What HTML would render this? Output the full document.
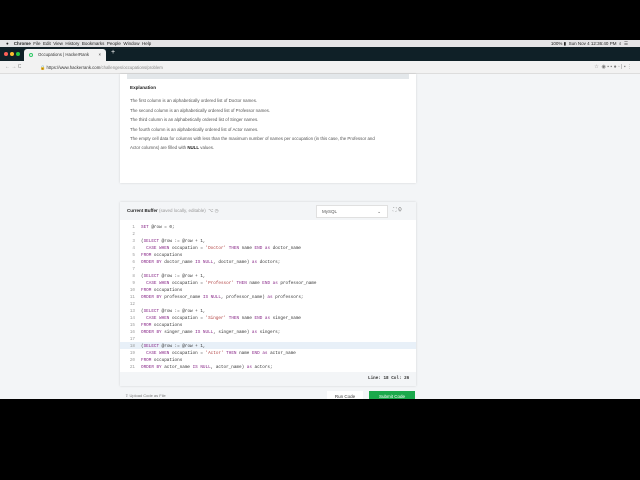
<!DOCTYPE html><html><head><style>
*{margin:0;padding:0;box-sizing:border-box}
body{width:640px;height:480px;background:#000;position:relative;overflow:hidden;font-family:"Liberation Sans",sans-serif}
.a{position:absolute}
.menu{top:40px;left:0;width:640px;height:7px;background:#e4e4e6;font-size:4.5px;line-height:7px;color:#222}
.tabs{top:47px;left:0;width:640px;height:14px;background:#0f2027}
.addr{top:61px;left:0;width:640px;height:13px;background:#f2f2f2;border-bottom:1px solid #ddd}
.page{top:74px;left:0;width:640px;height:325px;background:#f3f5f7}
.card{background:#fff;box-shadow:0 0 2px rgba(0,0,0,.15)}
.t{font-size:4.4px;color:#555;position:absolute;left:130px}
.code{font-family:"Liberation Mono",monospace;font-size:4.3px;color:#333;position:absolute;left:123px;white-space:pre}
.code b{font-weight:normal;color:#8a2a8a}.code i{font-style:normal;color:#b04040}
.ln{display:inline-block;width:12px;text-align:right;color:#999;margin-right:6px}
</style></head><body>
<div class="a menu"><span style="margin-left:6px">●</span><b style="margin-left:5px">Chrome</b>&nbsp; File &nbsp;Edit &nbsp;View &nbsp;History &nbsp;Bookmarks &nbsp;People &nbsp;Window &nbsp;Help<span style="position:absolute;right:12px">100% ▮ &nbsp;Sun Nov 4 12:36:40 PM &nbsp;⌕ &nbsp;☰</span></div>
<div class="a tabs">
<div class="a" style="left:4px;top:5px;width:4px;height:4px;border-radius:50%;background:#fc5f57"></div>
<div class="a" style="left:10px;top:5px;width:4px;height:4px;border-radius:50%;background:#fdbc2e"></div>
<div class="a" style="left:16px;top:5px;width:4px;height:4px;border-radius:50%;background:#28c840"></div>
<div class="a" style="left:24px;top:2px;width:82px;height:12px;background:#f2f2f2;border-radius:3px 3px 0 0;font-size:4.3px;line-height:12px;color:#333;padding-left:14px">Occupations | HackerRank<span style="position:absolute;right:5px">×</span><span style="position:absolute;left:5px;top:4px;width:4px;height:4px;border:1px solid #2ec866;border-radius:50%"></span></div>
<div class="a" style="left:111px;top:2px;color:#fff;font-size:7px">+</div></div>
<div class="a addr"><span class="a" style="left:5px;top:3px;font-size:5px;color:#888">← → C</span><span class="a" style="left:40px;top:4px;font-size:4.3px;color:#333">🔒 https://www.hackerrank.com<span style="color:#888">/challenges/occupations/problem</span></span><span class="a" style="right:8px;top:3px;font-size:5px;color:#777">☆ &nbsp;◉ ▪ ▪ ● ◦ | ▪ ⋮</span></div>
<div class="a page"></div>
<div class="a card" style="left:120px;top:74px;width:296px;height:109px"></div>
<div class="a" style="left:127px;top:74px;width:282px;height:5px;background:#e3e7ea"></div>
<div class="t" style="top:85px;font-weight:bold;color:#222;font-size:4.6px">Explanation</div>
<div class="t" style="top:98px">The first column is an alphabetically ordered list of Doctor names.</div>
<div class="t" style="top:108px">The second column is an alphabetically ordered list of Professor names.</div>
<div class="t" style="top:117px">The third column is an alphabetically ordered list of Singer names.</div>
<div class="t" style="top:127px">The fourth column is an alphabetically ordered list of Actor names.</div>
<div class="t" style="top:136px">The empty cell data for columns with less than the maximum number of names per occupation (in this case, the Professor and</div>
<div class="t" style="top:145px">Actor columns) are filled with <b style="color:#222">NULL</b> values.</div>
<div class="a card" style="left:120px;top:202px;width:296px;height:184px"></div>
<div class="a" style="left:120px;top:202px;width:296px;height:18px;background:#f3f5f7"></div>
<div class="a" style="left:127px;top:208px;font-size:4.5px;color:#222"><b>Current Buffer</b> <span style="color:#999">(saved locally, editable)</span> &nbsp;<span style="color:#888">⌥ ◷</span></div>
<div class="a" style="left:316px;top:205px;width:72px;height:13px;background:#fff;border:1px solid #e0e0e0;font-size:4.5px;line-height:11px;padding-left:5px;color:#555">MySQL<span style="position:absolute;right:6px">⌄</span></div>
<div class="a" style="left:393px;top:207px;font-size:5px;color:#888">⛶ ⚙</div>
<div class="a" style="left:120px;top:342px;width:296px;height:7px;background:#e8f0f8"></div>
<div class="code" style="top:224px;line-height:7px"><span class="ln">1</span><b>SET</b> @row = 0;
<span class="ln">2</span>
<span class="ln">3</span>(<b>SELECT</b> @row := @row + 1,
<span class="ln">4</span>  <b>CASE WHEN</b> occupation = <i>'Doctor'</i> <b>THEN</b> name <b>END</b> <b>as</b> doctor_name
<span class="ln">5</span><b>FROM</b> occupations
<span class="ln">6</span><b>ORDER BY</b> doctor_name <b>IS NULL</b>, doctor_name) <b>as</b> doctors;
<span class="ln">7</span>
<span class="ln">8</span>(<b>SELECT</b> @row := @row + 1,
<span class="ln">9</span>  <b>CASE WHEN</b> occupation = <i>'Professor'</i> <b>THEN</b> name <b>END</b> <b>as</b> professor_name
<span class="ln">10</span><b>FROM</b> occupations
<span class="ln">11</span><b>ORDER BY</b> professor_name <b>IS NULL</b>, professor_name) <b>as</b> professors;
<span class="ln">12</span>
<span class="ln">13</span>(<b>SELECT</b> @row := @row + 1,
<span class="ln">14</span>  <b>CASE WHEN</b> occupation = <i>'Singer'</i> <b>THEN</b> name <b>END</b> <b>as</b> singer_name
<span class="ln">15</span><b>FROM</b> occupations
<span class="ln">16</span><b>ORDER BY</b> singer_name <b>IS NULL</b>, singer_name) <b>as</b> singers;
<span class="ln">17</span>
<span class="ln">18</span>(<b>SELECT</b> @row := @row + 1,
<span class="ln">19</span>  <b>CASE WHEN</b> occupation = <i>'Actor'</i> <b>THEN</b> name <b>END</b> <b>as</b> actor_name
<span class="ln">20</span><b>FROM</b> occupations
<span class="ln">21</span><b>ORDER BY</b> actor_name <b>IS NULL</b>, actor_name) <b>as</b> actors;</div>
<div class="a" style="left:120px;top:372px;width:296px;height:14px;background:#f3f5f7"></div>
<div class="a" style="left:368px;top:376px;font-family:'Liberation Mono',monospace;font-size:4.3px;color:#333;font-weight:bold">Line: 18 Col: 26</div>
<div class="a" style="left:125px;top:393px;font-size:4px;color:#777">⇧ Upload Code as File</div>
<div class="a" style="left:327px;top:391px;width:36px;height:9px;background:#fff;font-size:4.5px;text-align:center;line-height:12px;color:#333">Run Code</div>
<div class="a" style="left:369px;top:391px;width:46px;height:9px;background:#1ba94c;font-size:4.5px;text-align:center;line-height:12px;color:#fff">Submit Code</div>
<div class="a" style="left:0;top:399px;width:640px;height:81px;background:#000"></div>
</body></html>
